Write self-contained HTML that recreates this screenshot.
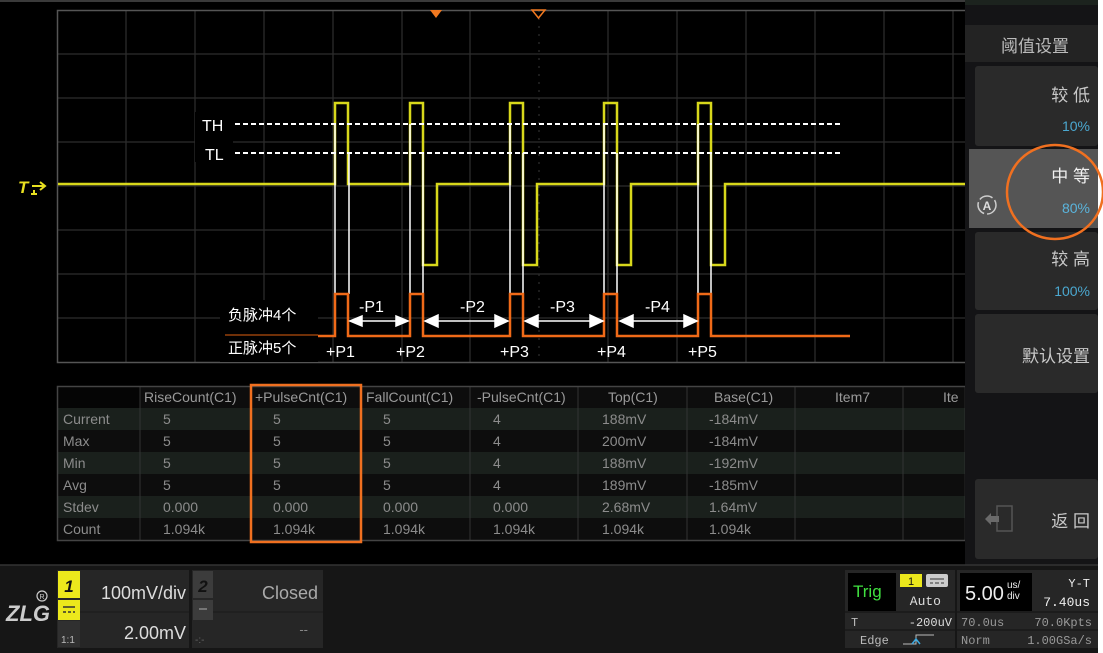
<!DOCTYPE html>
<html><head><meta charset="utf-8"><style>
html,body{margin:0;padding:0;background:#000;}
svg{display:block}
text{font-family:"Liberation Sans","Noto Sans CJK SC",sans-serif;}
.t{font-family:"Liberation Sans Narrow","Liberation Sans","Noto Sans CJK SC",sans-serif;font-size:14px;fill:#8c8c8c}
.h{font-family:"Liberation Sans Narrow","Liberation Sans",sans-serif;font-size:14px;fill:#9a9a9a}
.m{font-family:"Liberation Mono",monospace;}
</style></head><body>
<svg width="1103" height="653" viewBox="0 0 1103 653" xmlns="http://www.w3.org/2000/svg">
<rect width="1103" height="653" fill="#000"/>
<line x1="0" y1="1" x2="965" y2="1" stroke="#3a3a3a" stroke-width="2"/>
<!-- grid -->
<g stroke="#2e2e2e" stroke-width="1.2">
<line x1="126" y1="10" x2="126" y2="362"/><line x1="195" y1="10" x2="195" y2="362"/><line x1="264" y1="10" x2="264" y2="362"/><line x1="333" y1="10" x2="333" y2="362"/><line x1="402" y1="10" x2="402" y2="362"/><line x1="470" y1="10" x2="470" y2="362"/><line x1="608" y1="10" x2="608" y2="362"/><line x1="677" y1="10" x2="677" y2="362"/><line x1="746" y1="10" x2="746" y2="362"/><line x1="815" y1="10" x2="815" y2="362"/><line x1="884" y1="10" x2="884" y2="362"/><line x1="953" y1="10" x2="953" y2="362"/>
<line x1="57" y1="54" x2="965" y2="54"/><line x1="57" y1="98" x2="965" y2="98"/><line x1="57" y1="142" x2="965" y2="142"/><line x1="57" y1="186" x2="965" y2="186"/><line x1="57" y1="230" x2="965" y2="230"/><line x1="57" y1="274" x2="965" y2="274"/><line x1="57" y1="318" x2="965" y2="318"/>
</g>
<line x1="539" y1="10" x2="539" y2="362" stroke="#2e2e2e" stroke-width="1.2" stroke-dasharray="2,6"/>
<rect x="57.5" y="10.5" width="910" height="352" fill="none" stroke="#555" stroke-width="1.5"/>
<polygon points="430,10 442,10 436,18" fill="#f07820"/>
<polygon points="532,10 545,10 538.5,18" fill="none" stroke="#f07820" stroke-width="1.5"/>
<!-- trigger marker -->
<text x="18" y="193" font-size="17" font-weight="bold" font-style="italic" fill="#e8e020">T</text>
<path d="M32 186 h12 m-4 -4 l5 4 l-5 4 M34 190 v4 M31 194 h6" stroke="#e8e020" stroke-width="2" fill="none"/>
<!-- yellow waveform -->
<path d="M58 184 H335 V103 H348 V184 H410 V103 H423 V265 H437 V184 H510 V103 H523 V265 H537 V184 H604 V103 H617 V265 H631 V184 H698 V103 H711 V265 H725 V184 H965" fill="none" stroke="#e4e41c" stroke-width="2.5" opacity="0.95"/>
<!-- label boxes -->
<rect x="195" y="112" width="38" height="50" fill="#000"/>
<rect x="220" y="300" width="98" height="62" fill="#000"/>
<!-- dashed thresholds -->
<line x1="235" y1="124" x2="843" y2="124" stroke="#fff" stroke-width="2" stroke-dasharray="5,3"/>
<line x1="235" y1="153" x2="843" y2="153" stroke="#fff" stroke-width="2" stroke-dasharray="5,3"/>
<text x="202" y="131" font-size="16" fill="#fff">TH</text>
<text x="205" y="160" font-size="16" fill="#fff">TL</text>
<!-- white verticals -->
<g stroke="#fff" stroke-width="1.5">
<line x1="335" y1="124" x2="335" y2="294"/><line x1="349" y1="153" x2="349" y2="294"/>
<line x1="410" y1="124" x2="410" y2="294"/><line x1="423" y1="153" x2="423" y2="294"/>
<line x1="510" y1="124" x2="510" y2="294"/><line x1="523" y1="153" x2="523" y2="294"/>
<line x1="604" y1="124" x2="604" y2="294"/><line x1="617" y1="153" x2="617" y2="294"/>
<line x1="698" y1="124" x2="698" y2="294"/><line x1="711" y1="153" x2="711" y2="294"/>
</g>
<!-- orange trace -->
<line x1="225" y1="335" x2="318" y2="335" stroke="#e06010" stroke-width="1"/>
<path d="M318 336 H335 V294 H348 V336 H410 V294 H423 V336 H510 V294 H523 V336 H604 V294 H617 V336 H698 V294 H711 V336 H850" fill="none" stroke="#f06a18" stroke-width="2.5"/>
<!-- arrows -->
<g fill="#fff" stroke="#fff" stroke-width="1.5">
<line x1="355" y1="321" x2="402" y2="321"/><polygon points="350,321 362,316 362,326"/><polygon points="408,321 396,316 396,326"/>
<line x1="430" y1="321" x2="503" y2="321"/><polygon points="425,321 438,315 438,327"/><polygon points="508,321 495,315 495,327"/>
<line x1="530" y1="321" x2="598" y2="321"/><polygon points="525,321 538,315 538,327"/><polygon points="603,321 590,315 590,327"/>
<line x1="625" y1="321" x2="692" y2="321"/><polygon points="620,321 633,315 633,327"/><polygon points="697,321 684,315 684,327"/>
</g>
<g font-size="16" fill="#fff">
<text x="359" y="312">-P1</text><text x="460" y="312">-P2</text><text x="550" y="312">-P3</text><text x="645" y="312">-P4</text>
<text x="326" y="357">+P1</text><text x="396" y="357">+P2</text><text x="500" y="357">+P3</text><text x="597" y="357">+P4</text><text x="688" y="357">+P5</text>
<text x="228" y="320" font-size="15">负脉冲4个</text><text x="228" y="353" font-size="15">正脉冲5个</text>
</g>
<!-- table -->
<rect x="57" y="386" width="908" height="154" fill="#0d0d0d"/>
<g fill="#1a201c">
<rect x="57" y="408" width="908" height="22"/><rect x="57" y="452" width="908" height="22"/><rect x="57" y="496" width="908" height="22"/>
</g>
<rect x="57" y="386" width="83" height="22" fill="#050505"/>
<g stroke="#333" stroke-width="1">
<line x1="140" y1="386" x2="140" y2="540"/><line x1="251" y1="386" x2="251" y2="540"/><line x1="361" y1="386" x2="361" y2="540"/><line x1="470" y1="386" x2="470" y2="540"/><line x1="578" y1="386" x2="578" y2="540"/><line x1="687" y1="386" x2="687" y2="540"/><line x1="795" y1="386" x2="795" y2="540"/><line x1="903" y1="386" x2="903" y2="540"/>
</g>
<rect x="57.5" y="386.5" width="908" height="154" fill="none" stroke="#444" stroke-width="1.5"/>
<g class="h">
<text x="144" y="402">RiseCount(C1)</text><text x="255" y="402">+PulseCnt(C1)</text><text x="366" y="402">FallCount(C1)</text><text x="477" y="402">-PulseCnt(C1)</text><text x="608" y="402">Top(C1)</text><text x="714" y="402">Base(C1)</text><text x="835" y="402">Item7</text><text x="943" y="402">Ite</text>
</g>
<g class="t">
<text x="63" y="424">Current</text><text x="63" y="446">Max</text><text x="63" y="468">Min</text><text x="63" y="490">Avg</text><text x="63" y="512">Stdev</text><text x="63" y="534">Count</text>
<text x="163" y="424">5</text><text x="163" y="446">5</text><text x="163" y="468">5</text><text x="163" y="490">5</text><text x="163" y="512">0.000</text><text x="163" y="534">1.094k</text>
<text x="273" y="424">5</text><text x="273" y="446">5</text><text x="273" y="468">5</text><text x="273" y="490">5</text><text x="273" y="512">0.000</text><text x="273" y="534">1.094k</text>
<text x="383" y="424">5</text><text x="383" y="446">5</text><text x="383" y="468">5</text><text x="383" y="490">5</text><text x="383" y="512">0.000</text><text x="383" y="534">1.094k</text>
<text x="493" y="424">4</text><text x="493" y="446">4</text><text x="493" y="468">4</text><text x="493" y="490">4</text><text x="493" y="512">0.000</text><text x="493" y="534">1.094k</text>
<text x="602" y="424">188mV</text><text x="602" y="446">200mV</text><text x="602" y="468">188mV</text><text x="602" y="490">189mV</text><text x="602" y="512">2.68mV</text><text x="602" y="534">1.094k</text>
<text x="709" y="424">-184mV</text><text x="709" y="446">-184mV</text><text x="709" y="468">-192mV</text><text x="709" y="490">-185mV</text><text x="709" y="512">1.64mV</text><text x="709" y="534">1.094k</text>
</g>
<rect x="251" y="385" width="110" height="157" fill="none" stroke="#f07020" stroke-width="2.5"/>
<!-- right panel -->
<rect x="965" y="0" width="133" height="565" fill="#141416"/>
<rect x="965" y="0" width="133" height="5" fill="#1c231e"/>
<rect x="1098" y="0" width="5" height="653" fill="#fff"/>
<rect x="965" y="25" width="133" height="37" fill="#232323"/>
<text x="1035" y="52" font-size="17" fill="#bbb" text-anchor="middle">阈值设置</text>
<rect x="975" y="66" width="123" height="80" rx="3" fill="#2a2a2a"/>
<text x="1090" y="101" font-size="17" fill="#c8c8c8" text-anchor="end">较 低</text>
<text x="1090" y="131" font-size="14" fill="#4ba8d0" text-anchor="end">10%</text>
<rect x="969" y="149" width="129" height="79" fill="#555"/>
<text x="1090" y="182" font-size="17" fill="#f0f0f0" text-anchor="end">中 等</text>
<text x="1090" y="213" font-size="14" fill="#5ab4dc" text-anchor="end">80%</text>
<circle cx="987" cy="205" r="9" fill="none" stroke="#ccc" stroke-width="1.5" stroke-dasharray="14,3"/>
<text x="987" y="210" font-size="12" font-weight="bold" fill="#ddd" text-anchor="middle">A</text>
<rect x="975" y="232" width="123" height="78" rx="3" fill="#2a2a2a"/>
<text x="1090" y="265" font-size="17" fill="#c8c8c8" text-anchor="end">较 高</text>
<text x="1090" y="296" font-size="14" fill="#4ba8d0" text-anchor="end">100%</text>
<rect x="975" y="314" width="123" height="79" rx="3" fill="#2a2a2a"/>
<text x="1090" y="362" font-size="17" fill="#c8c8c8" text-anchor="end">默认设置</text>
<rect x="975" y="479" width="123" height="80" rx="3" fill="#2a2a2a"/>
<text x="1090" y="527" font-size="17" fill="#c8c8c8" text-anchor="end">返 回</text>
<rect x="997" y="506" width="15" height="25" fill="none" stroke="#555" stroke-width="1.5"/>
<path d="M985 519 l6 -6 v3 h8 v6 h-8 v3 z" fill="#6a6a6a"/>
<ellipse cx="1055" cy="192" rx="48" ry="47" fill="none" stroke="#f07020" stroke-width="2.5"/>
<!-- bottom bar -->
<rect x="0" y="565" width="1098" height="88" fill="#161616"/>
<line x1="0" y1="565" x2="1098" y2="565" stroke="#333" stroke-width="1.5"/>
<text x="6" y="621" font-size="22" font-weight="bold" font-style="italic" fill="#ccc">ZLG</text>
<circle cx="42" cy="596" r="5" fill="none" stroke="#ccc" stroke-width="1.2"/>
<text x="42" y="599" font-size="7" fill="#ccc" text-anchor="middle">R</text>
<rect x="57" y="570" width="132" height="78" fill="#262626"/>
<rect x="58" y="571" width="22" height="27" fill="#ece81c"/>
<text x="69" y="592" font-size="17" font-weight="bold" font-style="italic" fill="#111" text-anchor="middle">1</text>
<rect x="58" y="600" width="22" height="20" fill="#ece81c"/>
<path d="M63 607 h12 M63 612 h3 M68 612 h3 M73 612 h2" stroke="#333" stroke-width="1.5"/>
<rect x="58" y="621" width="22" height="26" fill="#303030"/>
<text x="61" y="643" font-size="10" fill="#bbb">1:1</text>
<line x1="80" y1="612" x2="189" y2="612" stroke="#1a1a1a"/>
<text x="186" y="599" font-size="18" fill="#ddd" text-anchor="end">100mV/div</text>
<text x="186" y="639" font-size="18" fill="#ddd" text-anchor="end">2.00mV</text>
<rect x="192" y="570" width="131" height="78" fill="#262626"/>
<rect x="193" y="571" width="20" height="27" fill="#3c3c3c"/>
<text x="203" y="592" font-size="17" font-weight="bold" font-style="italic" fill="#111" text-anchor="middle">2</text>
<rect x="193" y="600" width="20" height="20" fill="#3c3c3c"/>
<path d="M199 609 h8" stroke="#888" stroke-width="1.5"/>
<line x1="213" y1="612" x2="323" y2="612" stroke="#1a1a1a"/>
<text x="318" y="599" font-size="18" fill="#aaa" text-anchor="end">Closed</text>
<text x="308" y="634" font-size="13" fill="#888" text-anchor="end">--</text>
<text x="195" y="643" font-size="10" fill="#666">-:-</text>
<!-- trigger block -->
<rect x="845" y="570" width="110" height="78" fill="#262626"/>
<rect x="848" y="573" width="48" height="38" fill="#000"/>
<text x="853" y="597" font-size="17" fill="#40e040">Trig</text>
<rect x="900" y="574" width="22" height="13" fill="#ece81c"/>
<text x="911" y="585" font-size="11" fill="#111" text-anchor="middle">1</text>
<rect x="926" y="574" width="22" height="13" rx="2" fill="#ccc"/>
<path d="M930 579 h14 M930 583 h3 M935 583 h4 M941 583 h3" stroke="#333" stroke-width="1"/>
<text x="941" y="605" font-size="13" class="m" fill="#ddd" text-anchor="end">Auto</text>
<line x1="845" y1="612" x2="955" y2="612" stroke="#111"/>
<line x1="845" y1="630" x2="955" y2="630" stroke="#111"/>
<text x="851" y="626" font-size="12" class="m" fill="#bbb">T</text>
<text x="952" y="626" font-size="12" class="m" fill="#ddd" text-anchor="end">-200uV</text>
<text x="860" y="644" font-size="12" class="m" fill="#bbb">Edge</text>
<path d="M903 644 h13 v-9 h18" stroke="#bbb" stroke-width="1" fill="none"/>
<path d="M912 644 l4 -5 l4 5" stroke="#3aa8e0" stroke-width="1.5" fill="none"/>
<!-- timebase -->
<rect x="957" y="570" width="141" height="78" fill="#262626"/>
<rect x="960" y="573" width="72" height="38" fill="#000"/>
<text x="965" y="600" font-size="20" fill="#eee">5.00</text>
<text x="1007" y="588" font-size="10" fill="#eee">us/</text>
<text x="1007" y="599" font-size="10" fill="#eee">div</text>
<text x="1090" y="587" font-size="12" class="m" fill="#eee" text-anchor="end">Y-T</text>
<text x="1090" y="606" font-size="13" class="m" fill="#eee" text-anchor="end">7.40us</text>
<line x1="957" y1="612" x2="1098" y2="612" stroke="#111"/>
<line x1="957" y1="630" x2="1098" y2="630" stroke="#111"/>
<text x="961" y="626" font-size="12" class="m" fill="#999">70.0us</text>
<text x="1092" y="626" font-size="12" class="m" fill="#999" text-anchor="end">70.0Kpts</text>
<text x="961" y="644" font-size="12" class="m" fill="#999">Norm</text>
<text x="1092" y="644" font-size="12" class="m" fill="#999" text-anchor="end">1.00GSa/s</text>
</svg>
</body></html>
